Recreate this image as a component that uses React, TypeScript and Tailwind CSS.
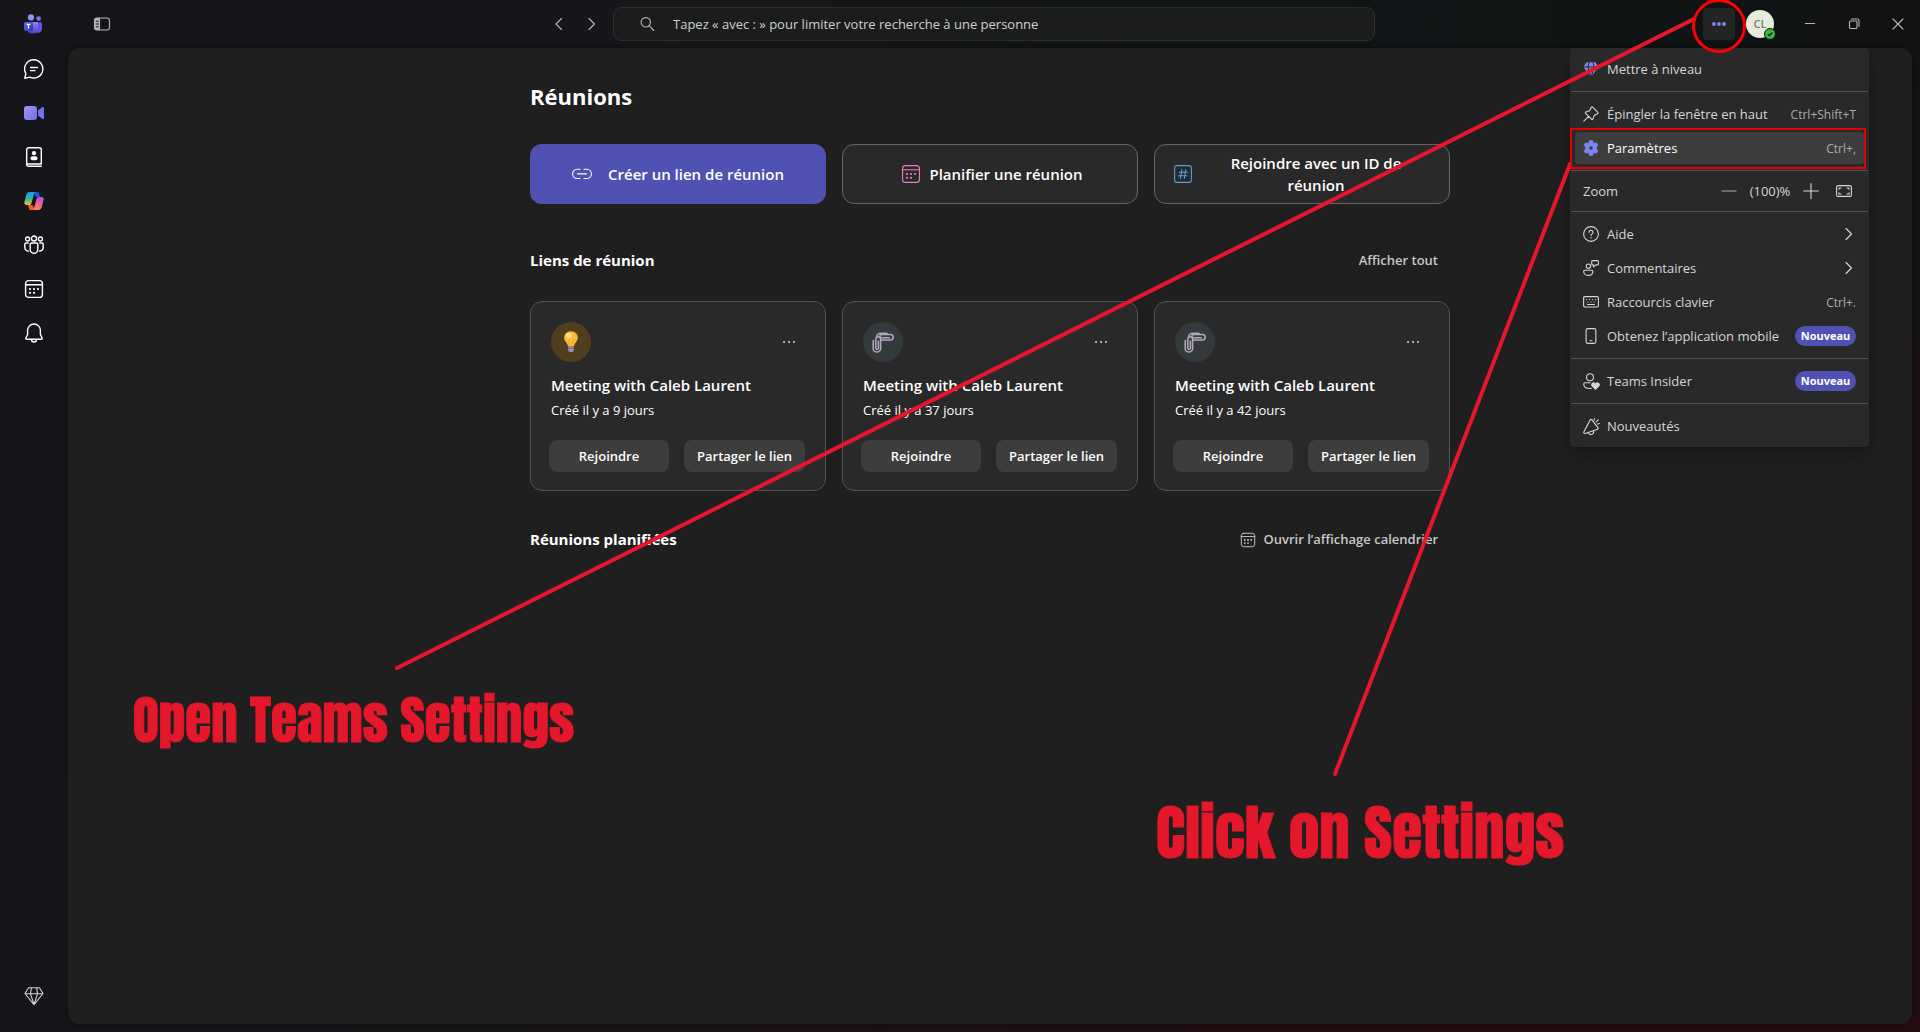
import React from 'react';

type IconProps = { className?: string };

function Icon({ children, className = 'size-5', box = 20 }: { children: React.ReactNode; className?: string; box?: number }) {
  return (
    <svg
      viewBox={`0 0 ${box} ${box}`}
      className={className}
      fill="none"
      stroke="currentColor"
      strokeWidth={1.1}
      strokeLinecap="round"
      strokeLinejoin="round"
      aria-hidden="true"
    >
      {children}
    </svg>
  );
}

function TeamsLogo() {
  return (
    <svg viewBox="0 0 20 20" className="size-5" aria-hidden="true">
      <defs>
        <linearGradient id="tmBack" x1="0" y1="0" x2="0" y2="1">
          <stop offset="0" stopColor="#8b8cf5" />
          <stop offset="1" stopColor="#4a3fd0" />
        </linearGradient>
        <linearGradient id="tmBadge" x1="0" y1="0" x2="1" y2="1">
          <stop offset="0" stopColor="#5b6ff0" />
          <stop offset="1" stopColor="#2b2fa0" />
        </linearGradient>
      </defs>
      <circle cx="14.600" cy="4.600" r="2.400" fill="#7a78ee" />
      <circle cx="7" cy="3.400" r="3.100" fill="#8f92f6" />
      <path d="M11 8.200h5.600c.9 0 1.400.6 1.400 1.400v5.200a4 4 0 0 1-7 2.600z" fill="#6a4fe0" />
      <path d="M4 8h8.600c.8 0 1.400.6 1.400 1.400v5.800a4.600 4.600 0 0 1-4.600 4.300H7.600A4.600 4.600 0 0 1 3 14.900V9z" fill="url(#tmBack)" />
      <rect x="0" y="8" width="9" height="9" rx="1.800" fill="url(#tmBadge)" />
      <path d="M2.700 10.400h3.600M4.500 10.400v4.300" stroke="#fff" strokeWidth="1.200" />
    </svg>
  );
}

function ChatIcon() {
  return (
    <Icon>
      <path d="M10 .8a9.100 9.100 0 1 1-4.200 17.300L.8 19.200l1.100-4.700A9.100 9.100 0 0 1 10 .8z" strokeWidth={1.400} />
      <path d="M6.500 8.500h7M6.500 11.700h4.500" strokeWidth={1.300} />
    </Icon>
  );
}

function VideoIcon() {
  return (
    <svg viewBox="0 0 20 20" className="size-5" aria-hidden="true">
      <defs>
        <linearGradient id="vid" x1="0" y1="0" x2="1" y2="1">
          <stop offset="0" stopColor="#a992f8" />
          <stop offset="1" stopColor="#6a70e6" />
        </linearGradient>
      </defs>
      <rect x="0" y="3" width="13" height="14" rx="3" fill="url(#vid)" />
      <path d="M14 7.600 18.300 4.100c.7-.5 1.700-.1 1.700.8v10.200c0 .9-1 1.300-1.700.8L14 12.400z" fill="#6c72ea" />
    </svg>
  );
}

function ContactsIcon() {
  return (
    <Icon>
      <path d="M2.700 17V2.700a2 2 0 0 1 2-2h10.600a2 2 0 0 1 2 2V17z" strokeWidth={1.400} />
      <path d="M2.700 16.700v.9a1.700 1.700 0 0 0 1.700 1.700h12.900" strokeWidth={1.400} />
      <circle cx="10" cy="6.200" r="2.100" fill="currentColor" stroke="none" />
      <rect x="6.500" y="9.200" width="7" height="4" rx="2" fill="currentColor" stroke="none" />
    </Icon>
  );
}

function CopilotIcon() {
  return (
    <svg viewBox="0 0 20 20" className="size-5" aria-hidden="true">
      <defs>
        <linearGradient id="cpA" x1="0" y1="0" x2="0" y2="1">
          <stop offset="0" stopColor="#1c9cf0" />
          <stop offset=".55" stopColor="#34b5a0" />
          <stop offset="1" stopColor="#f5c417" />
        </linearGradient>
        <linearGradient id="cpB" x1="0" y1="0" x2="0" y2="1">
          <stop offset="0" stopColor="#a855f0" />
          <stop offset=".5" stopColor="#ee5b9c" />
          <stop offset="1" stopColor="#fb8a4a" />
        </linearGradient>
      </defs>
      <path d="M9 1h4.300c1 0 1.500.7 1.800 1.600l1 3.400H12z" fill="#1757d6" />
      <path d="M11 19H6.700c-1 0-1.500-.7-1.800-1.600L4 14h4.500z" fill="#f2552c" />
      <path d="M5.600 1h6.200c-1 .2-1.500.9-1.800 1.900l-2.500 9c-.4 1.400-1.200 2.100-2.500 2.100H2.600C.7 14-.1 12.600.4 10.900l2-7.400C2.900 1.900 4 1 5.600 1z" fill="url(#cpA)" />
      <path d="M14.400 19H8.200c1-.2 1.500-.9 1.800-1.900l2.500-9c.4-1.400 1.200-2.100 2.500-2.100h2.400c1.900 0 2.700 1.400 2.200 3.100l-2 7.400c-.5 1.600-1.600 2.500-3.200 2.500z" fill="url(#cpB)" />
    </svg>
  );
}

function PeopleIcon() {
  return (
    <Icon>
      <g strokeWidth={1.400}>
        <circle cx="10" cy="3.500" r="2.500" />
        <circle cx="3.600" cy="4" r="2" />
        <circle cx="16.400" cy="4" r="2" />
        <path d="M7.500 8h5c.7 0 1.300.5 1.300 1.300v5.200a3.800 3.800 0 0 1-7.600 0V9.300c0-.8.600-1.300 1.300-1.300z" />
        <path d="M4.200 8H2.100C1.300 8 .8 8.500.8 9.300v3.500a3.500 3.500 0 0 0 3.900 3.300M15.800 8h2.100c.8 0 1.300.5 1.300 1.300v3.500a3.500 3.500 0 0 1-3.900 3.300" />
      </g>
    </Icon>
  );
}

function CalendarIcon({ className, weight = 1.200 }: IconProps & { weight?: number }) {
  return (
    <Icon className={className}>
      <rect x="1.600" y="1.600" width="16.800" height="16.800" rx="3" strokeWidth={weight} />
      <path d="M1.600 5.700h16.800" strokeWidth={weight} />
      <g fill="currentColor" stroke="none">
        <circle cx="6" cy="10" r="1.100" />
        <circle cx="10" cy="10" r="1.100" />
        <circle cx="14" cy="10" r="1.100" />
        <circle cx="6" cy="13.800" r="1.100" />
        <circle cx="10" cy="13.800" r="1.100" />
      </g>
    </Icon>
  );
}

function BellIcon() {
  return (
    <Icon>
      <path d="M10 1a6.400 6.400 0 0 0-6.400 6.400v4.100L1.900 15c-.3.700.1 1.300.8 1.300h14.600c.7 0 1.100-.6.800-1.300l-1.700-3.500V7.400A6.400 6.400 0 0 0 10 1z" strokeWidth={1.400} />
      <path d="M7.500 16.500a2.500 2.500 0 0 0 5 0" strokeWidth={1.400} />
    </Icon>
  );
}

function DiamondIcon() {
  return (
    <Icon>
      <path d="M4.500 1.800h11L19 7.500 10 18.600 1 7.500zM1.200 7.800h17.600M7.300 2 6.500 7.800 10 18.400l3.500-10.600L12.700 2" />
    </Icon>
  );
}

function DiamondFilledIcon() {
  return (
    <svg viewBox="0 0 20 20" className="size-4" fill="#7f85f5" aria-hidden="true">
      <path d="M4.500 1.500h2.400L5.700 6.900H.8zM8.100 1.500h3.800l1.100 5.400H7zM13.100 1.500h2.400l3.700 5.400h-4.900zM.9 8.200h4.700l3 9.800zM7 8.200h6L10 18.800zM14.400 8.200h4.700L11.400 18z" />
    </svg>
  );
}

function PinIcon() {
  return (
    <Icon className="size-4" box={16}>
      <path d="M9.700 1.200 14.800 6.300c.5.500.3 1.200-.3 1.500l-3.300 1.600-1.300 3.700c-.2.600-.8.700-1.200.3L2.600 7.300c-.4-.4-.3-1 .3-1.200l3.700-1.300 1.600-3.300c.3-.6 1-.8 1.500-.3zM5.600 10.400.8 15.200" />
    </Icon>
  );
}

function GearIcon() {
  return (
    <svg viewBox="0 0 16 16" className="size-4" fill="#7f85f5" stroke="#7f85f5" strokeWidth=".8" strokeLinejoin="round" fillRule="evenodd" aria-hidden="true">
      <path d="M6.500.6h3l.5 2.100 1.200.7 2.100-.7 1.600 2.700-1.500 1.500v2.200l1.500 1.500-1.600 2.700-2.100-.7-1.200.7-.5 2.100h-3L6 13.300l-1.200-.7-2.100.7-1.600-2.700 1.500-1.500V6.900L1.100 5.400l1.600-2.700 2.100.7L6 2.700zM8 5.800a2.200 2.200 0 1 0 0 4.400 2.200 2.200 0 0 0 0-4.400z" />
    </svg>
  );
}

function HelpIcon() {
  return (
    <Icon className="size-4" box={16}>
      <circle cx="8" cy="8" r="7.400" />
      <path d="M6 6.200a2 2 0 1 1 3.100 1.700c-.7.500-1.100.9-1.100 1.600" />
      <circle cx="8" cy="11.700" r=".7" fill="currentColor" stroke="none" />
    </Icon>
  );
}

function FeedbackIcon() {
  return (
    <Icon className="size-4" box={16}>
      <circle cx="5.400" cy="6.200" r="2.200" />
      <path d="M1.600 10.200h7.300c.6 0 1 .4 1 1 0 2.200-1.700 4.200-4.600 4.200S.6 13.400.6 11.200c0-.6.400-1 1-1z" />
      <path d="M9.700.6h4.700c.6 0 1 .4 1 1v2.300c0 .6-.4 1-1 1h-1.600L10.500 7l-.1-2.100h-.7c-.6 0-1-.4-1-1V1.600c0-.6.400-1 1-1z" />
    </Icon>
  );
}

function KeyboardIcon() {
  return (
    <Icon className="size-4" box={16}>
      <rect x=".6" y="2.600" width="14.800" height="10.400" rx="1.200" />
      <path d="M3.300 5.600h.1M6.400 5.600h.1M9.500 5.600h.1M12.600 5.600h.1M4.800 8h.1M8 8h.1M11.100 8h.1M4.500 10.500h7" />
    </Icon>
  );
}

function PhoneIcon() {
  return (
    <Icon className="size-4" box={16}>
      <rect x="3.100" y=".6" width="9.800" height="14.800" rx="1.800" />
      <path d="M7 12.700h2" />
    </Icon>
  );
}

function InsiderIcon() {
  return (
    <svg viewBox="0 0 17 17" className="size-[17px]" fill="none" stroke="currentColor" strokeWidth="1.100" strokeLinecap="round" aria-hidden="true">
      <circle cx="7" cy="4.200" r="3.500" />
      <path d="M7.300 9.700H2c-.8 0-1.300.5-1.300 1.300 0 2.600 2.200 4.500 5.900 4.500.7 0 1.200 0 1.700-.2" />
      <path d="M12.500 17 8.700 13.300a2.300 2.300 0 0 1 3.800-2.900 2.300 2.300 0 0 1 3.800 2.900z" fill="currentColor" stroke="none" />
    </svg>
  );
}

function WhatsNewIcon() {
  return (
    <Icon className="size-[17px]" box={17}>
      <path d="M7.300 1.700c.4-.5 1.100-.5 1.500 0l6.300 8.100c.4.500.2 1.200-.4 1.400L2 15.400c-.8.200-1.500-.5-1.200-1.300zM5.500 14.800c.5 1.600 2.200 2 3.600 1.400 1.300-.6 1.800-1.800 1.500-3" />
      <path d="M11 2.300l.5-1.600M13.200 3.800l2-2M14.500 6l1.900-.5" />
    </Icon>
  );
}

function LinkIcon() {
  return (
    <Icon>
      <path d="M8 5.300H5.200a4.600 4.600 0 0 0 0 9.200H8M12 5.300h2.800a4.600 4.600 0 0 1 0 9.200H12M5.500 9.900h9" />
    </Icon>
  );
}

function HashIcon() {
  return (
    <Icon>
      <rect x="1.600" y="1.600" width="16.800" height="16.800" rx="2.500" />
      <path d="M8.900 5.500 7.400 14.500M12.800 5.500l-1.500 9M6.200 8.200h8.400M5.600 11.800H14" />
    </Icon>
  );
}

function DotsIcon({ className = 'size-4', r = 1 }: IconProps & { r?: number }) {
  return (
    <svg viewBox="0 0 16 16" className={className} fill="currentColor" aria-hidden="true">
      <circle cx="3" cy="8" r={r} />
      <circle cx="8" cy="8" r={r} />
      <circle cx="13" cy="8" r={r} />
    </svg>
  );
}

function Chevron({ left = false }: { left?: boolean }) {
  return (
    <Icon className="size-4" box={16}>
      <path d={left ? 'M10.500 2.500 5 8l5.500 5.500' : 'M6 2.500 11.500 8 6 13.500'} />
    </Icon>
  );
}

function BulbPicture() {
  return (
    <svg viewBox="0 0 24 24" className="size-6" aria-hidden="true">
      <path d="M12 1.200c4 0 6.800 2.800 6.800 6.600 0 3.600-3.200 5-3.900 8.800H9.100C8.400 12.800 5.200 11.400 5.200 7.800 5.200 4 8 1.200 12 1.200z" fill="#fdb937" />
      <ellipse cx="10" cy="5.600" rx="3.200" ry="2.800" fill="#ffdf7a" />
      <path d="M9.400 10.500 11 16M14.600 10.500 13 16" stroke="#f19a1c" strokeWidth=".7" fill="none" />
      <path d="M9.200 16.600h5.600v3.200a2.800 2.400 0 0 1-5.600 0z" fill="#a58bb5" />
      <path d="M9.200 18.300h5.600" stroke="#6e5a80" strokeWidth=".8" />
    </svg>
  );
}

function ClipsPicture() {
  return (
    <svg viewBox="0 0 24 24" className="size-6" fill="none" stroke="#b3a8bd" strokeWidth="1.500" strokeLinecap="round" aria-hidden="true">
      <path d="M2.200 10.500v7.900a3.700 3.700 0 0 0 7.400 0V9.200a2.400 2.400 0 0 0-4.800 0v8.900a1.300 1.300 0 0 0 2.600 0v-6.900" />
      <path d="M16 3.200H9.500A4 4 0 0 0 5.800 6M9.600 10h9.900a2.700 2.700 0 0 0 0-5.400H10.500a1.600 1.600 0 0 0 0 3.200h8" />
    </svg>
  );
}

const RAIL = [
  { label: 'Conversation', icon: <ChatIcon /> },
  { label: 'Réunions', icon: <VideoIcon /> },
  { label: 'Contacts', icon: <ContactsIcon /> },
  { label: 'Copilot', icon: <CopilotIcon /> },
  { label: 'Communautés', icon: <PeopleIcon /> },
  { label: 'Calendrier', icon: <CalendarIcon weight={1.400} /> },
  { label: 'Activité', icon: <BellIcon /> },
];

function Rail() {
  return (
    <nav className="flex w-[68px] shrink-0 flex-col items-center pb-3.5 text-white">
      <div className="flex h-[47px] items-center justify-center">
        <TeamsLogo />
      </div>
      {RAIL.map((item) => (
        <button key={item.label} type="button" aria-label={item.label} className="flex h-11 w-full items-center justify-center">
          {item.icon}
        </button>
      ))}
      <button type="button" aria-label="Mettre à niveau" className="mt-auto flex h-11 w-full items-center justify-center text-[#d0d0d0]">
        <DiamondIcon />
      </button>
    </nav>
  );
}

function TitleBar() {
  return (
    <header className="grid h-12 grid-cols-[1fr_minmax(0,762px)_1fr] items-center text-[#b5b5b5]">
      <div className="flex items-center justify-between pl-6 pr-3.5">
        <button type="button" aria-label="Volet latéral">
          <svg viewBox="0 0 20 20" className="size-5" fill="none" stroke="currentColor" strokeWidth="1.100" aria-hidden="true">
            <path d="M5 4h3v12H5a3 3 0 0 1-3-3V7a3 3 0 0 1 3-3z" fill="currentColor" stroke="none" />
            <rect x="2.500" y="4" width="15" height="12" rx="2.500" />
            <path d="M3.800 7.300h3M3.800 10h3M3.800 12.700h3" stroke="#15161a" />
          </svg>
        </button>
        <div className="flex gap-4">
          <button type="button" aria-label="Précédent"><Chevron left /></button>
          <button type="button" aria-label="Suivant"><Chevron /></button>
        </div>
      </div>
      <label className="flex h-[34px] items-center gap-[18px] rounded-lg border border-[#2c2e2e] bg-[#1b1d1d] pl-[25px]">
        <Icon className="size-4" box={16}>
          <circle cx="6.800" cy="6.300" r="4.700" />
          <path d="m10.300 9.900 4.500 4.600" />
        </Icon>
        <input
          type="text"
          aria-label="Rechercher"
          placeholder="Tapez « avec : » pour limiter votre recherche à une personne"
          className="min-w-0 flex-1 bg-transparent pt-0.5 text-[13px] text-white outline-none placeholder:text-[#cfcfcf]"
        />
      </label>
      <div className="flex items-center justify-end">
        <button type="button" aria-label="Paramètres et plus" className="mr-[11px] flex size-8 items-center justify-center rounded bg-[#232525] text-[#7f85f5]">
          <DotsIcon r={1.900} />
        </button>
        <button type="button" aria-label="Compte" className="relative mr-3.5 flex size-7 items-center justify-center rounded-full bg-[#e6ecdb] text-[11px] font-semibold text-[#71806a]">
          CL
          <svg viewBox="0 0 12 12" className="absolute -bottom-0.5 -right-0.5 size-3" aria-hidden="true">
            <circle cx="6" cy="6" r="5.500" fill="#3db83b" stroke="#111415" />
            <path d="m3.800 6.200 1.500 1.500 3-3.200" fill="none" stroke="#111415" strokeWidth="1.100" />
          </svg>
        </button>
        <button type="button" aria-label="Réduire" className="flex h-8 w-11 items-center justify-center">
          <Icon className="size-3" box={12}><path d="M1.500 5.500h9" /></Icon>
        </button>
        <button type="button" aria-label="Restaurer" className="flex h-8 w-11 items-center justify-center">
          <Icon className="size-3" box={12}>
            <rect x="1.500" y="3" width="7.500" height="7.500" rx="1" />
            <path d="M3.500 1h5.500a2 2 0 0 1 2 2v5.500" />
          </Icon>
        </button>
        <button type="button" aria-label="Fermer" className="flex h-8 w-11 items-center justify-center">
          <Icon className="size-3" box={12}><path d="m1 1 10 10M11 1 1 11" /></Icon>
        </button>
      </div>
    </header>
  );
}

const LINKS = [
  { age: 'Créé il y a 9 jours', bulb: true },
  { age: 'Créé il y a 37 jours', bulb: false },
  { age: 'Créé il y a 42 jours', bulb: false },
];

function MeetingCard({ age, bulb }: { age: string; bulb: boolean }) {
  return (
    <article className="rounded-xl border border-[#525252] bg-[#292929] pb-[18px] pl-[18px] pr-5 pt-5">
      <div className="flex items-center justify-between pl-0.5 pr-2">
        <div className={`flex size-10 items-center justify-center rounded-full ${bulb ? 'bg-[#4f3f1f]' : 'bg-[#343a3b]'}`}>
          {bulb ? <BulbPicture /> : <ClipsPicture />}
        </div>
        <button type="button" aria-label="Plus d’options" className="text-[#d6d6d6]">
          <DotsIcon />
        </button>
      </div>
      <h3 className="mt-[11px] pl-0.5 text-[15px] font-semibold leading-6">Meeting with Caleb Laurent</h3>
      <p className="mt-px pl-0.5 text-[13px] leading-6">{age}</p>
      <div className="mt-[18px] flex gap-[15px]">
        <button type="button" className="h-8 w-[120px] rounded-lg bg-[#3d3d3d] pt-px text-[13px] font-semibold">Rejoindre</button>
        <button type="button" className="h-8 flex-1 rounded-lg bg-[#3d3d3d] pt-px text-[13px] font-semibold">Partager le lien</button>
      </div>
    </article>
  );
}

function Meetings() {
  return (
    <main className="mb-2 mr-2 flex-1 overflow-hidden rounded-xl bg-[#1f1f1f] text-white shadow-[0_0_6px_rgba(0,0,0,0.4)]">
      <div className="mx-auto max-w-[920px]">
        <h1 className="pt-8 text-[22px] font-bold leading-8">Réunions</h1>
        <div className="mt-8 grid grid-cols-3 gap-4 text-[15px] font-semibold leading-[22px]">
          <button type="button" className="flex h-[60px] items-center justify-center gap-4 rounded-xl bg-[#4f52b2]">
            <LinkIcon />
            <span>Créer un lien de réunion</span>
          </button>
          <button type="button" className="flex h-[60px] items-center justify-center gap-2 rounded-xl border border-[#666666] bg-[#292929] pl-1">
            <span className="text-[#ee7cc0]"><CalendarIcon className="size-5" weight={1.100} /></span>
            <span>Planifier une réunion</span>
          </button>
          <button type="button" className="flex h-[60px] items-center gap-2 rounded-xl border border-[#666666] bg-[#292929] px-[18px]">
            <span className="text-[#4aa3e6]"><HashIcon /></span>
            <span className="flex-1">Rejoindre avec un ID de réunion</span>
          </button>
        </div>
        <div className="mt-11 flex h-6 items-center justify-between pr-3">
          <h2 className="text-[15px] font-bold">Liens de réunion</h2>
          <a href="#liens" className="pt-px text-[13px] font-semibold text-[#c8c8c8]">Afficher tout</a>
        </div>
        <div className="mt-[29px] grid grid-cols-3 gap-4">
          {LINKS.map((link) => <MeetingCard key={link.age} {...link} />)}
        </div>
        <div className="mt-9 flex h-6 items-center justify-between pr-3">
          <h2 className="text-[15px] font-bold">Réunions planifiées</h2>
          <a href="#calendrier" className="flex items-center gap-2 pt-px text-[13px] font-semibold text-[#c8c8c8]">
            <CalendarIcon className="size-4" />
            Ouvrir l’affichage calendrier
          </a>
        </div>
      </div>
    </main>
  );
}

function MenuRow({ icon, label, trailing, active = false }: { icon: React.ReactNode; label: string; trailing?: React.ReactNode; active?: boolean }) {
  return (
    <li className="flex h-[34px] items-center px-[5px]">
      <button
        type="button"
        role="menuitem"
        className={`flex h-8 w-full items-center rounded px-2 text-left text-[13px] ${active ? 'bg-[#3d3d3d] text-white' : 'text-[#d6d6d6]'}`}
      >
        <span className="w-6 shrink-0">{icon}</span>
        <span className="flex-1 whitespace-nowrap pt-px">{label}</span>
        {trailing}
      </button>
    </li>
  );
}

function Shortcut({ keys }: { keys: string }) {
  return <span className="pt-px text-[12px] text-[#adadad]">{keys}</span>;
}

function NewBadge() {
  return <span className="flex h-5 w-[61px] items-center justify-center rounded-full bg-[#4f52b2] text-[11px] font-bold text-white">Nouveau</span>;
}

function Divider() {
  return <li role="separator" className="mx-px my-[5px] h-px bg-[#525252]" />;
}

function SettingsMenu() {
  return (
    <ul role="menu" className="absolute right-[51px] top-12 w-[299px] rounded bg-[#292929] py-1 shadow-[0_8px_16px_rgba(0,0,0,0.28)]">
      <MenuRow icon={<DiamondFilledIcon />} label="Mettre à niveau" />
      <Divider />
      <MenuRow icon={<PinIcon />} label="Épingler la fenêtre en haut" trailing={<Shortcut keys="Ctrl+Shift+T" />} />
      <MenuRow icon={<GearIcon />} label="Paramètres" active trailing={<Shortcut keys="Ctrl+," />} />
      <Divider />
      <li className="flex h-[30px] items-center pl-[13px] pr-[17px] text-[13px] text-[#d6d6d6]">
        <span className="flex-1 pt-px">Zoom</span>
        <button type="button" aria-label="Zoom arrière" className="text-[#adadad]">
          <Icon className="size-4" box={16}><path d="M1 8h14" /></Icon>
        </button>
        <span className="w-[66px] pt-px text-center">(100)%</span>
        <button type="button" aria-label="Zoom avant">
          <Icon className="size-4" box={16}><path d="M.6 8h14.800M8 .6v14.800" /></Icon>
        </button>
        <button type="button" aria-label="Plein écran" className="ml-[17px]">
          <Icon className="size-4" box={16}>
            <rect x=".6" y="2.600" width="14.800" height="10.800" rx="1.500" />
            <path d="M3 6.300V5h2M11 5h2v1.300M13 9.700V11h-2M5 11H3V9.700" />
          </Icon>
        </button>
      </li>
      <Divider />
      <MenuRow icon={<HelpIcon />} label="Aide" trailing={<Chevron />} />
      <MenuRow icon={<FeedbackIcon />} label="Commentaires" trailing={<Chevron />} />
      <MenuRow icon={<KeyboardIcon />} label="Raccourcis clavier" trailing={<Shortcut keys="Ctrl+." />} />
      <MenuRow icon={<PhoneIcon />} label="Obtenez l’application mobile" trailing={<NewBadge />} />
      <Divider />
      <MenuRow icon={<InsiderIcon />} label="Teams Insider" trailing={<NewBadge />} />
      <Divider />
      <MenuRow icon={<WhatsNewIcon />} label="Nouveautés" />
    </ul>
  );
}

function Annotations() {
  return (
    <div className="pointer-events-none absolute inset-0 overflow-hidden font-['Anton','Impact','Liberation_Sans_Narrow','Roboto',sans-serif] font-normal text-[#e5172b] [-webkit-text-stroke:1px_#e5172b]">
      <svg className="absolute inset-0 size-full" fill="none" stroke="currentColor" strokeWidth="4" strokeLinecap="round" aria-hidden="true">
        <path d="M397 668 1694 19M1335 774 1570 164" />
        <circle cx="1719" cy="26" r="25.500" stroke="#ff0000" strokeWidth="3" />
        <rect x="1571" y="129" width="294" height="39" stroke="#e60000" strokeWidth="2" />
      </svg>
      <p className="absolute left-[133px] top-[684px] whitespace-nowrap text-[53px] leading-[72px]">Open Teams Settings</p>
      <p className="absolute left-[1156px] top-[796px] whitespace-nowrap text-[61px] leading-[72px]">Click on Settings</p>
    </div>
  );
}

export default function App() {
  return (
    <div className="relative flex h-screen overflow-hidden bg-[radial-gradient(ellipse_at_85%_110%,#260d10_0%,transparent_60%),linear-gradient(100deg,#15151a_0%,#15171a_30%,#101314_85%,#161116_100%)] font-['Open_Sans','Noto_Sans',sans-serif]">
      <Rail />
      <div className="flex min-w-0 flex-1 flex-col">
        <TitleBar />
        <Meetings />
      </div>
      <SettingsMenu />
      <Annotations />
    </div>
  );
}
